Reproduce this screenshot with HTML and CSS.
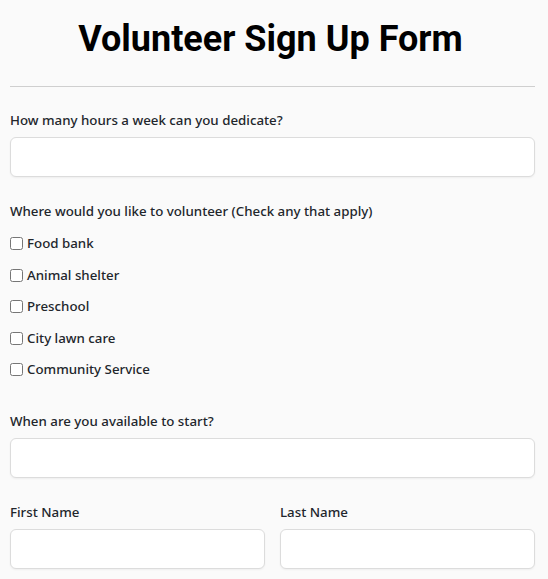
FILE: index.html
```html
<!DOCTYPE html>
<html lang="en">
<head>
    <meta charset="UTF-8">
    <meta name="viewport" content="width=device-width, initial-scale=1.0">
    <title>Volunteer Sign Up</title>
    <link rel="stylesheet" href="styles.css">
</head>
<body>
    <div class="form-container">
        <h1 class="form-title">Volunteer Sign Up Form</h1>
        <hr class="divider">

        <form>
            <div class="field">
                <label for="hours" class="field-label">How many hours a week can you dedicate?</label>
                <input type="text" id="hours" class="input-field">
            </div>

            <div class="field">
                <div class="field-label">Where would you like to volunteer (Check any that apply)</div>
                <div class="checkbox-list">
                    <label class="checkbox-item"><input type="checkbox"> Food bank</label>
                    <label class="checkbox-item"><input type="checkbox"> Animal shelter</label>
                    <label class="checkbox-item"><input type="checkbox"> Preschool</label>
                    <label class="checkbox-item"><input type="checkbox"> City lawn care</label>
                    <label class="checkbox-item"><input type="checkbox"> Community Service</label>
                </div>
            </div>

            <div class="field">
                <label for="start" class="field-label">When are you available to start?</label>
                <input type="text" id="start" class="input-field">
            </div>

            <div class="field-row">
                <div class="field">
                    <label for="first" class="field-label">First Name</label>
                    <input type="text" id="first" class="input-field">
                </div>
                <div class="field">
                    <label for="last" class="field-label">Last Name</label>
                    <input type="text" id="last" class="input-field">
                </div>
            </div>
        </form>
    </div>
</body>
</html>
```

FILE: styles.css
```css
body {
    margin: 0;
    background-color: #fafafa;
    font-family: "Noto Sans", "Open Sans", Arial, sans-serif;
    color: #22262c;
}

.form-container {
    width: 525px;
    margin: 0 10px;
}

.form-title {
    font-family: Roboto, Arial, sans-serif;
    font-size: 36px;
    font-weight: bold;
    color: #000;
    text-align: center;
    margin: 18px 0 0;
    line-height: 42px;
    padding-right: 4px;
}

.divider {
    border: none;
    border-top: 1px solid #cfcfcf;
    margin: 26px 0 0;
}

form {
    padding-top: 24px;
}

.field {
    display: flex;
    flex-direction: column;
    margin-bottom: 25px;
}

.field-label {
    font-size: 13.3px;
    font-weight: 500;
    line-height: 19px;
    margin-bottom: 7px;
}

.input-field {
    height: 40px;
    padding: 8px 12px;
    border: 1px solid #dcdcdc;
    border-radius: 6px;
    background: #fff;
    box-sizing: border-box;
    font-size: 14px;
    box-shadow: 0 1px 2px rgba(0, 0, 0, 0.05);
}

.checkbox-list {
    display: flex;
    flex-direction: column;
    gap: 12.5px;
    margin-top: 6px;
    margin-bottom: 8px;
}

.checkbox-item {
    display: flex;
    align-items: center;
    gap: 4px;
    font-size: 13.3px;
    font-weight: 500;
    line-height: 19px;
}

.checkbox-item input {
    width: 13px;
    height: 13px;
    margin: 0;
}

.field-row {
    display: grid;
    grid-template-columns: 1fr 1fr;
    gap: 15px;
}
```
